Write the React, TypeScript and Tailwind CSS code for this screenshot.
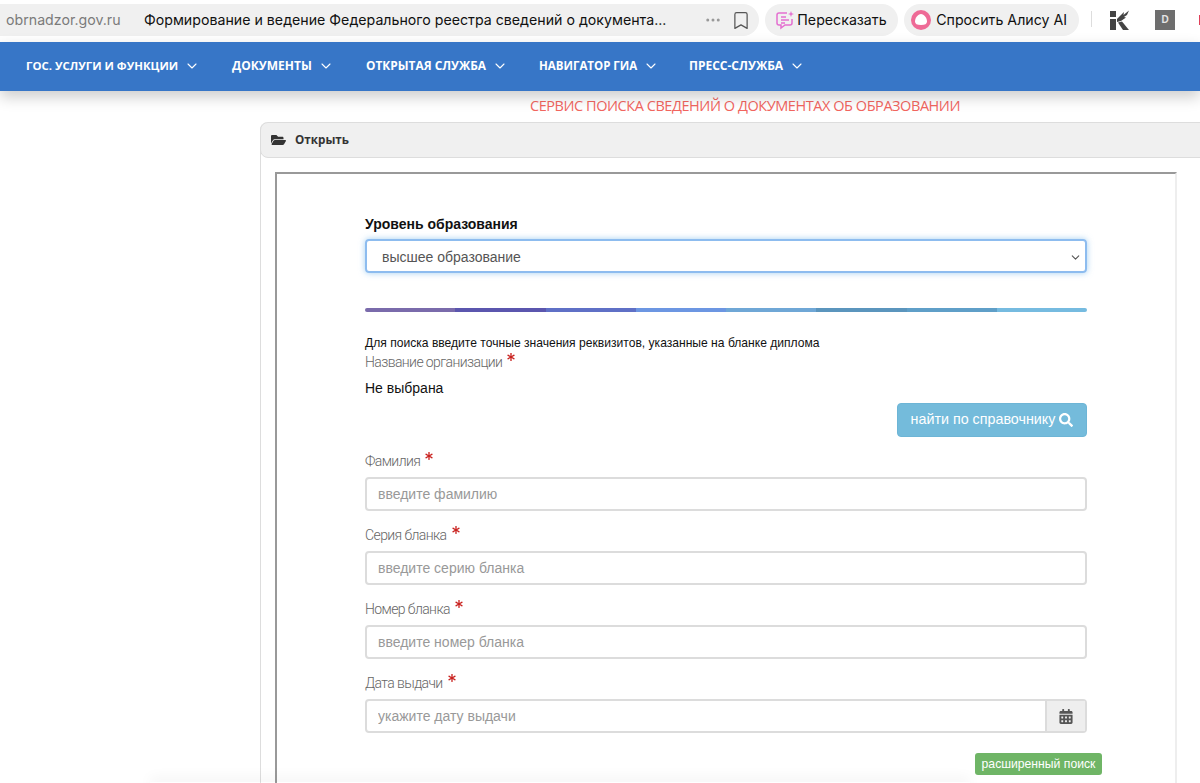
import { Bookmark, ChevronDown, Ellipsis } from "lucide-react";
import { FaAsterisk, FaCalendarAlt, FaFolderOpen, FaSearch } from "react-icons/fa";

const menu = [
  { label: "ГОС. УСЛУГИ И ФУНКЦИИ", className: "w-[206px] text-[11.4px]" },
  { label: "ДОКУМЕНТЫ", className: "w-[134px] text-[12px]" },
  { label: "ОТКРЫТАЯ СЛУЖБА", className: "w-[173px] text-[11.9px]" },
  { label: "НАВИГАТОР ГИА", className: "w-[150px] text-[11.5px]" },
  { label: "ПРЕСС-СЛУЖБА", className: "w-[150px] text-[12px]" },
];

const barColors = [
  "bg-[#7a6bab]",
  "bg-[#5b56ae]",
  "bg-[#5f70c6]",
  "bg-[#6c96e2]",
  "bg-[#6fa7d6]",
  "bg-[#5b95bd]",
  "bg-[#5f9fc8]",
  "bg-[#76bbe0]",
];

const Label = ({ text }: { text: string }) => (
  <div className="h-[22px] text-[14px] leading-[20px] font-light tracking-[-0.6px] text-[#666] font-['Roboto',sans-serif] flex">
    <span className="mt-[1px]">{text}</span>
    <FaAsterisk className="ml-[5px] mt-[2px] w-[8px] h-[8px] text-[#c9211e]" />
  </div>
);

const Field = ({ label, placeholder }: { label: string; placeholder: string }) => (
  <div className="mt-[13px]">
    <Label text={label} />
    <input
      placeholder={placeholder}
      className="block mt-[5px] w-full h-[34px] px-[11px] rounded-[4px] border-2 border-[#dcdcdc] bg-white text-[14px] outline-none placeholder:text-[#999]"
    />
  </div>
);

export default function App() {
  return (
    <div className="relative w-[1200px] h-[783px] overflow-hidden bg-white font-['Liberation_Sans',sans-serif]">
      <div className="h-[42px] pt-[4px] flex items-start text-[14.2px] leading-[32px] text-[#111] font-['Inter',sans-serif]">
        <div className="h-[32px] w-[760px] flex items-center bg-[#f0f0f0] rounded-r-[16px] pl-[6px] pr-[7px]">
          <span className="text-[#7b7b7b] w-[138px]">obrnadzor.gov.ru</span>
          <span className="flex-1 whitespace-nowrap">
            Формирование и ведение Федерального реестра сведений о документа...
          </span>
          <Ellipsis className="w-[18px] h-[18px] text-[#999]" />
          <Bookmark className="w-[22px] h-[21px] text-[#555] ml-[8px]" strokeWidth={1.4} />
        </div>
        <div className="ml-[6px] h-[32px] w-[133px] flex items-center bg-[#f0f0f0] rounded-[16px] pl-[10px]">
          <svg viewBox="0 0 20 20" className="w-[20px] h-[20px]" fill="none" stroke="#e46fd0" strokeWidth="1.5">
            <path d="M12 3H4a2 2 0 0 0-2 2v8a2 2 0 0 0 2 2h2v3l4-3h5a2 2 0 0 0 2-2V9" />
            <path d="M6 7h5M6 10h8M6 13h4" />
            <path d="M16 1l.8 2.2L19 4l-2.2.8L16 7l-.8-2.2L13 4l2.2-.8z" fill="#e46fd0" stroke="none" />
          </svg>
          <span className="ml-[2px]">Пересказать</span>
        </div>
        <div className="ml-[6px] h-[32px] w-[175px] flex items-center bg-[#f0f0f0] rounded-[16px] pl-[7px]">
          <svg viewBox="0 0 20 20" className="w-[20px] h-[20px]">
            <circle cx="10" cy="10" r="10" fill="#ee6a96" />
            <path d="M10 4c3 0 6 4 6 7.500 0 2.500-2 3.500-6 3.500s-6-1-6-3.500C4 8 7 4 10 4z" fill="#fff" />
          </svg>
          <span className="ml-[5px] whitespace-nowrap">Спросить Алису AI</span>
        </div>
        <div className="ml-[12px] mt-[7px] w-[1px] h-[16px] bg-[#ddd]" />
        <svg viewBox="0 0 20 20" className="ml-[18px] mt-[6px] w-[20px] h-[20px]" fill="#444">
          <path d="M0 1h6v6H0zM0 9h6v11H0z" />
          <path d="M7 9l7-7-.5 3L19 .5 17 5l-3 2 2 .5-5 3.500-4 1z" />
          <path d="M8 12.500l4-1L19 20h-6z" />
        </svg>
        <div className="ml-[25px] mt-[6px] w-[20px] h-[20px] bg-[#6e6e6e] text-[#e4e4e4] text-[10px] leading-[20px] text-center font-bold font-['Liberation_Sans',sans-serif]">
          D
        </div>
        <div className="ml-[24px] mt-[11px] w-[1px] h-[10px] bg-[#e0405a]" />
      </div>

      <nav className="h-[49px] pb-[2px] bg-[#3776c7] flex items-center pl-[26px] shadow-[0_6px_14px_rgba(0,0,0,0.2)] relative text-white font-bold font-['Open_Sans',sans-serif]">
        {menu.map((item) => (
          <div key={item.label} className={`flex items-center whitespace-nowrap ${item.className}`}>
            {item.label}
            <ChevronDown className="ml-[6px] mt-[1px] w-[16px] h-[16px]" strokeWidth={1.6} />
          </div>
        ))}
      </nav>

      <div className="h-[31px] pb-[2px] pl-[290px] flex items-center justify-center text-[14.5px] tracking-[-0.44px] text-[#f2665f] font-['Open_Sans',sans-serif]">
        СЕРВИС ПОИСКА СВЕДЕНИЙ О ДОКУМЕНТАХ ОБ ОБРАЗОВАНИИ
      </div>

      <div className="ml-[260px] w-[960px] h-[700px] border-l border-[#ddd] rounded-tl-[8px]">
        <div className="h-[36px] -ml-px bg-[#f0f0f0] border border-[#ddd] rounded-l-[8px] flex items-center pl-[10px] text-[11.7px] font-bold text-[#333] font-['Open_Sans',sans-serif]">
          <FaFolderOpen className="w-[15px] h-[14px] text-[#333]" />
          <span className="ml-[9px]">Открыть</span>
        </div>
        <div className="mt-[14px] ml-[14px] w-[902px] h-[700px] border-t-2 border-l-2 border-r-2 border-t-[#999] border-l-[#999] border-r-[#eee] pl-[88px] pr-[88px] pt-[41px]">
          <div className="text-[14px] leading-[18px] font-bold text-[#111]">Уровень образования</div>
          <div className="mt-[6px] h-[34px] pt-[2px] rounded-[4px] border-2 border-[#8dbcef] shadow-[0_0_6px_rgba(102,175,233,0.6)] flex items-center pl-[15px] pr-[3px] text-[14px] text-[#555]">
            <span className="flex-1">высшее образование</span>
            <ChevronDown className="w-[13px] h-[13px] text-[#555]" />
          </div>
          <div className="mt-[35px] h-[4px] flex rounded-full overflow-hidden">
            {barColors.map((color) => (
              <div key={color} className={`flex-1 ${color}`} />
            ))}
          </div>
          <div className="mt-[23px] text-[12.1px] leading-[16px] text-[#111]">
            Для поиска введите точные значения реквизитов, указанные на бланке диплома
          </div>
          <Label text="Название организации" />
          <div className="mt-[6px] text-[14px] leading-[18px] text-[#111]">Не выбрана</div>
          <div className="mt-[6px] flex justify-end">
            <button className="h-[34px] w-[190px] rounded-[4px] bg-[#74bbdb] border border-[#6db5d6] text-white text-[14.3px] flex items-center justify-center gap-[4px]">
              найти по справочнику
              <FaSearch className="w-[14px] h-[14px]" />
            </button>
          </div>
          <Field label="Фамилия" placeholder="введите фамилию" />
          <Field label="Серия бланка" placeholder="введите серию бланка" />
          <Field label="Номер бланка" placeholder="введите номер бланка" />
          <div className="mt-[13px]">
            <Label text="Дата выдачи" />
            <div className="mt-[5px] h-[34px] flex rounded-[4px] border-2 border-[#dcdcdc]">
              <input
                placeholder="укажите дату выдачи"
                className="flex-1 min-w-0 px-[11px] text-[14px] outline-none placeholder:text-[#999]"
              />
              <div className="w-[40px] bg-[#eee] border-l-2 border-[#dcdcdc] flex items-center justify-center">
                <FaCalendarAlt className="w-[14px] h-[15px] text-[#555]" />
              </div>
            </div>
          </div>
          <div className="mt-[20px] -mr-[15px] flex justify-end">
            <button className="h-[22px] w-[127px] rounded-[3px] bg-[#6fb566] text-white text-[12.2px] flex items-center justify-center">
              расширенный поиск
            </button>
          </div>
        </div>
      </div>
      <div className="absolute left-[150px] top-[782px] w-[820px] h-[10px] shadow-[0_-4px_14px_rgba(0,0,0,0.05)]" />
    </div>
  );
}
